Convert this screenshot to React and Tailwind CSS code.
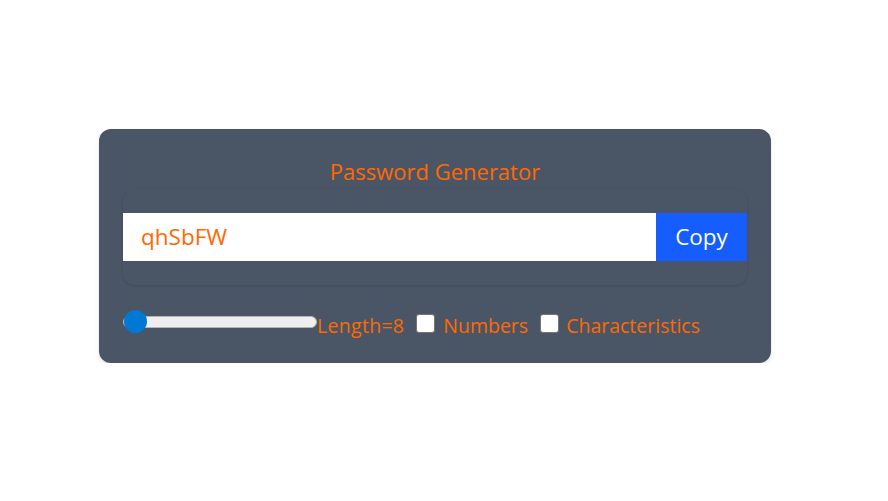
import { useState } from "react";

function App() {
  const [length, setLength] = useState(8);
  const [numbers, setNumbers] = useState(false);
  const [chars, setChars] = useState(false);
  const [password] = useState("qhSbFW");

  return (
    <div className="w-[870px] pt-[129px]" style={{ fontFamily: '"Open Sans", "Noto Sans", sans-serif' }}>
      <div className="w-[672px] mx-auto shadow-md rounded-[12px] px-[24px] pt-[24px] pb-[25px] bg-gray-600 text-orange-500">
        <h1 className="text-center text-[22px] leading-[36px]">Password Generator</h1>

        {/* Password field + copy */}
        <div className="shadow-sm rounded-[12px] py-[24px] mb-[25px]">
          <div className="flex h-[48px]">
            <input
              type="text"
              value={password}
              readOnly
              className="outline-none w-full bg-white px-[18px] text-[22.5px] text-orange-500"
            />
            <button className="w-[91px] shrink-0 bg-blue-600 text-white text-[22.5px]">Copy</button>
          </div>
        </div>

        {/* Options */}
        <div className="flex items-center h-[28px] text-[19.5px]">
          <div className="flex items-center">
            <input
              type="range"
              min={8}
              max={100}
              value={length}
              onChange={(e) => setLength(e.target.value)}
              className="w-[194px] h-[23px] mt-[-5px] appearance-none bg-transparent cursor-pointer [&::-webkit-slider-runnable-track]:h-[12px] [&::-webkit-slider-runnable-track]:bg-[#efefef] [&::-webkit-slider-runnable-track]:border [&::-webkit-slider-runnable-track]:border-[#b4b4b4] [&::-webkit-slider-runnable-track]:rounded-full [&::-webkit-slider-thumb]:appearance-none [&::-webkit-slider-thumb]:w-[23px] [&::-webkit-slider-thumb]:h-[23px] [&::-webkit-slider-thumb]:rounded-full [&::-webkit-slider-thumb]:bg-[#0078d4] [&::-webkit-slider-thumb]:mt-[-6.5px]"
            />
            <label className="leading-[28px] mt-[3px] tracking-[0.3px]">Length={length}</label>
          </div>
          <div className="flex items-center ml-[12px]">
            <input
              type="checkbox"
              checked={numbers}
              onChange={() => setNumbers((p) => !p)}
              className="appearance-none w-[19px] h-[19px] bg-white border-[1.5px] border-[#767676] rounded-[3px] mr-[8px] mt-[-1px]"
            />
            <label className="leading-[28px] mt-[3px]">Numbers</label>
          </div>
          <div className="flex items-center ml-[12px]">
            <input
              type="checkbox"
              checked={chars}
              onChange={() => setChars((p) => !p)}
              className="appearance-none w-[19px] h-[19px] bg-white border-[1.5px] border-[#767676] rounded-[3px] mr-[7px] mt-[-1px]"
            />
            <label className="leading-[28px] mt-[3px]">Characteristics</label>
          </div>
        </div>
      </div>
    </div>
  );
}

export default App;
